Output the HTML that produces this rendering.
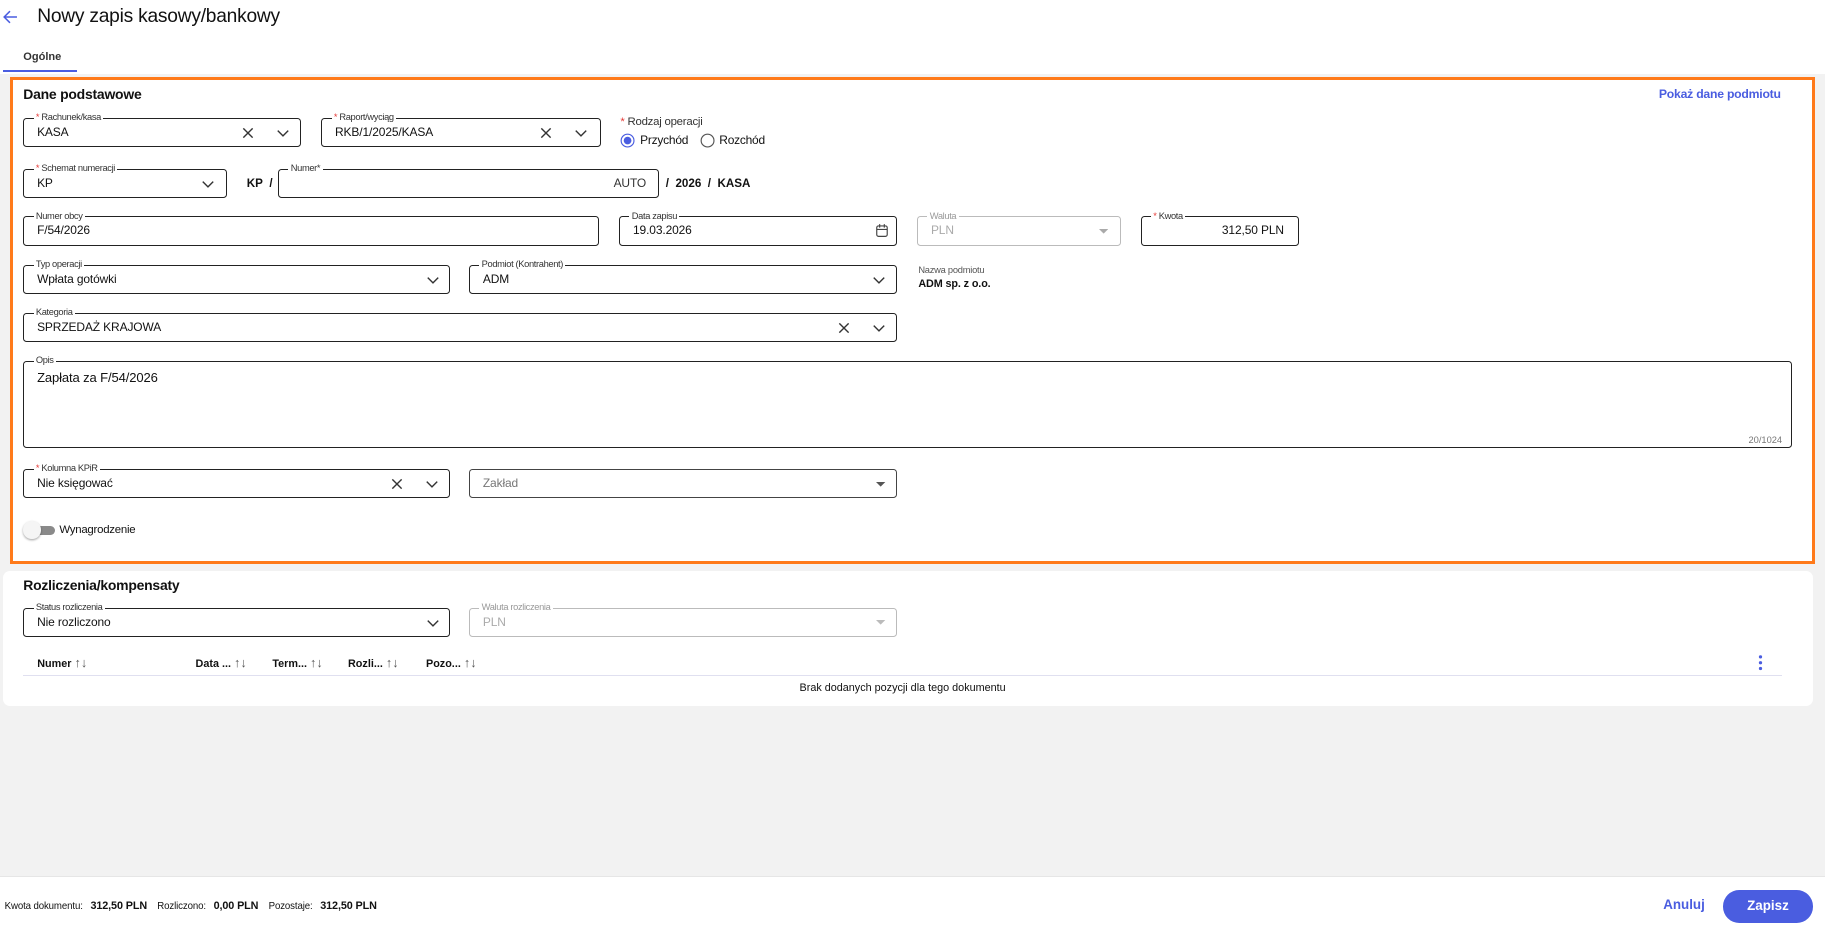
<!DOCTYPE html>
<html><head><meta charset="utf-8"><style>
html,body{margin:0;padding:0}
body{width:1825px;height:929px;overflow:hidden;background:#fff;font-family:"Liberation Sans",sans-serif;color:#111}
#r{zoom:1.16390;width:1568px;height:799px;position:relative;background:#f2f2f2}
.a{position:absolute}
.top{position:absolute;left:0;top:0;width:1568px;height:64px;background:#fff}
.f{position:absolute;border:1px solid #222;border-radius:3px;height:25px;box-sizing:border-box;background:#fff}
.f.d{border-color:#bbb}
.f .l{position:absolute;top:-6px;left:8px;font-size:8px;background:#fff;padding:0 2px;color:#333;line-height:10px;letter-spacing:-.3px}
.f.d .l{color:#999}
.f .v{position:absolute;left:11px;top:6px;font-size:10.3px;line-height:12px;letter-spacing:-.1px}
.f.d .v{color:#aaa}
.s{color:#e53935}
.ic{position:absolute;top:6px}
.b{font-weight:bold}
</style></head><body><div id="r">
<div class="top"></div>
<svg class="a" style="left:3px;top:9px" width="13" height="12" viewBox="0 0 13 12"><path d="M12 6H1.5M6 1L1 6l5 5" stroke="#4a5de0" stroke-width="1.3" fill="none"/></svg>
<div class="a" style="left:32px;top:5px;font-size:16.5px;letter-spacing:-.2px">Nowy zapis kasowy/bankowy</div>
<div class="a" style="left:20px;top:44px;font-size:9.5px;font-weight:bold;color:#333">Ogólne</div>
<div class="a" style="left:3px;top:60px;width:63px;height:2px;background:#4a5de0"></div>

<div class="a" style="left:9px;top:66px;width:1550px;height:419px;box-sizing:border-box;border:3px solid #ff7a1a;background:#fff"></div>
<div class="a b" style="left:20px;top:74px;font-size:12px;letter-spacing:-.2px">Dane podstawowe</div>
<div class="a b" style="left:1424px;top:75px;width:106px;text-align:right;font-size:10.5px;letter-spacing:-.2px;color:#4a5de0">Pokaż dane podmiotu</div>

<div class="f" style="left:20px;top:101px;width:239px"><span class="l"><span class="s">*</span> Rachunek/kasa</span><span class="v">KASA</span>
<svg class="ic" style="left:186px" width="12" height="12"><path d="M2 2l8 8M10 2l-8 8" stroke="#333" stroke-width="1.2"/></svg>
<svg class="ic" style="left:216px" width="12" height="12"><path d="M1.5 4l4.5 4.5 4.5-4.5" stroke="#333" stroke-width="1.2" fill="none"/></svg></div>
<div class="f" style="left:276px;top:101px;width:240px"><span class="l"><span class="s">*</span> Raport/wyciąg</span><span class="v">RKB/1/2025/KASA</span>
<svg class="ic" style="left:186px" width="12" height="12"><path d="M2 2l8 8M10 2l-8 8" stroke="#333" stroke-width="1.2"/></svg>
<svg class="ic" style="left:216px" width="12" height="12"><path d="M1.5 4l4.5 4.5 4.5-4.5" stroke="#333" stroke-width="1.2" fill="none"/></svg></div>
<div class="a" style="left:533px;top:100px;font-size:9.8px;color:#333;letter-spacing:-.2px"><span class="s">*</span> Rodzaj operacji</div>
<svg class="a" style="left:533px;top:114px" width="13" height="13"><circle cx="6.5" cy="6.5" r="5.5" stroke="#4a5de0" fill="#fff"/><circle cx="6.5" cy="6.5" r="3.3" fill="#4a5de0"/></svg>
<div class="a" style="left:550px;top:114px;font-size:10.3px;letter-spacing:-.2px">Przychód</div>
<svg class="a" style="left:601px;top:114px" width="13" height="13"><circle cx="6.5" cy="6.5" r="5.5" stroke="#555" fill="#fff"/></svg>
<div class="a" style="left:618px;top:114px;font-size:10.3px;letter-spacing:-.2px">Rozchód</div>

<div class="f" style="left:20px;top:145px;width:175px"><span class="l"><span class="s">*</span> Schemat numeracji</span><span class="v">KP</span>
<svg class="ic" style="left:152px" width="12" height="12"><path d="M1.5 4l4.5 4.5 4.5-4.5" stroke="#333" stroke-width="1.2" fill="none"/></svg></div>
<div class="a b" style="left:212px;top:152px;font-size:10px">KP&nbsp; /</div>
<div class="f" style="left:239px;top:145px;width:327px"><span class="l">Numer*</span><span class="v" style="left:auto;right:10px;color:#333">AUTO</span></div>
<div class="a b" style="left:572px;top:152px;font-size:10px">/&nbsp; 2026&nbsp; /&nbsp; KASA</div>

<div class="f" style="left:20px;top:186px;width:495px"><span class="l">Numer obcy</span><span class="v">F/54/2026</span></div>
<div class="f" style="left:532px;top:186px;width:239px"><span class="l">Data zapisu</span><span class="v">19.03.2026</span>
<svg class="ic" style="left:219px;top:5px" width="12" height="13"><rect x="1.5" y="2.5" width="9" height="9" rx="1.5" stroke="#444" fill="none"/><path d="M1.5 5.5h9M4 1v3M8 1v3" stroke="#444"/></svg></div>
<div class="f d" style="left:788px;top:186px;width:175px"><span class="l">Waluta</span><span class="v">PLN</span>
<svg class="ic" style="left:155px;top:10px" width="8" height="5"><path d="M0 0h8L4 4z" fill="#aaa"/></svg></div>
<div class="f" style="left:980px;top:186px;width:136px"><span class="l"><span class="s">*</span> Kwota</span><span class="v" style="left:auto;right:12px">312,50 PLN</span></div>

<div class="f" style="left:20px;top:228px;width:367px"><span class="l">Typ operacji</span><span class="v">Wpłata gotówki</span>
<svg class="ic" style="left:345px" width="12" height="12"><path d="M1.5 4l4.5 4.5 4.5-4.5" stroke="#333" stroke-width="1.2" fill="none"/></svg></div>
<div class="f" style="left:403px;top:228px;width:368px"><span class="l">Podmiot (Kontrahent)</span><span class="v">ADM</span>
<svg class="ic" style="left:345px" width="12" height="12"><path d="M1.5 4l4.5 4.5 4.5-4.5" stroke="#333" stroke-width="1.2" fill="none"/></svg></div>
<div class="a" style="left:789px;top:228px;font-size:8px;color:#555;letter-spacing:-.2px">Nazwa podmiotu</div>
<div class="a b" style="left:789px;top:239px;font-size:9.3px;letter-spacing:-.1px">ADM sp. z o.o.</div>

<div class="f" style="left:20px;top:269px;width:751px"><span class="l">Kategoria</span><span class="v">SPRZEDAŻ KRAJOWA</span>
<svg class="ic" style="left:698px" width="12" height="12"><path d="M2 2l8 8M10 2l-8 8" stroke="#333" stroke-width="1.2"/></svg>
<svg class="ic" style="left:728px" width="12" height="12"><path d="M1.5 4l4.5 4.5 4.5-4.5" stroke="#333" stroke-width="1.2" fill="none"/></svg></div>

<div class="f" style="left:20px;top:310px;width:1520px;height:75px"><span class="l">Opis</span><span class="v" style="top:8px;font-size:11.2px">Zapłata za F/54/2026</span>
<span class="a" style="right:8px;bottom:2px;font-size:8px;color:#777">20/1024</span></div>

<div class="f" style="left:20px;top:403px;width:367px"><span class="l"><span class="s">*</span> Kolumna KPiR</span><span class="v">Nie księgować</span>
<svg class="ic" style="left:314px" width="12" height="12"><path d="M2 2l8 8M10 2l-8 8" stroke="#333" stroke-width="1.2"/></svg>
<svg class="ic" style="left:344px" width="12" height="12"><path d="M1.5 4l4.5 4.5 4.5-4.5" stroke="#333" stroke-width="1.2" fill="none"/></svg></div>
<div class="f" style="left:403px;top:403px;width:368px;border-color:#444"><span class="v" style="color:#777">Zakład</span>
<svg class="ic" style="left:349px;top:10px" width="8" height="5"><path d="M0 0h8L4 4z" fill="#555"/></svg></div>

<div class="a" style="left:25px;top:452px;width:22px;height:8px;border-radius:4px;background:#8a8a8a"></div>
<div class="a" style="left:20px;top:448px;width:15px;height:15px;border-radius:50%;background:#f5f5f5;box-shadow:0 1px 2px rgba(0,0,0,.35)"></div>
<div class="a" style="left:51px;top:450px;font-size:9.8px;letter-spacing:-.2px">Wynagrodzenie</div>

<div class="a" style="left:3px;top:491px;width:1555px;height:116px;background:#fff;border-radius:6px"></div>
<div class="a b" style="left:20px;top:496px;font-size:12px;letter-spacing:-.2px">Rozliczenia/kompensaty</div>
<div class="f" style="left:20px;top:522px;width:367px"><span class="l">Status rozliczenia</span><span class="v">Nie rozliczono</span>
<svg class="ic" style="left:345px" width="12" height="12"><path d="M1.5 4l4.5 4.5 4.5-4.5" stroke="#333" stroke-width="1.2" fill="none"/></svg></div>
<div class="f d" style="left:403px;top:522px;width:368px"><span class="l">Waluta rozliczenia</span><span class="v">PLN</span>
<svg class="ic" style="left:349px;top:10px" width="8" height="5"><path d="M0 0h8L4 4z" fill="#bbb"/></svg></div>
<div class="a b" style="left:32px;top:563px;font-size:9.3px">Numer <span style="font-weight:normal;color:#555;font-size:11px">↑↓</span></div>
<div class="a b" style="left:168px;top:563px;font-size:9.3px">Data ... <span style="font-weight:normal;color:#555;font-size:11px">↑↓</span></div>
<div class="a b" style="left:234px;top:563px;font-size:9.3px">Term... <span style="font-weight:normal;color:#555;font-size:11px">↑↓</span></div>
<div class="a b" style="left:299px;top:563px;font-size:9.3px">Rozli... <span style="font-weight:normal;color:#555;font-size:11px">↑↓</span></div>
<div class="a b" style="left:366px;top:563px;font-size:9.3px">Pozo... <span style="font-weight:normal;color:#555;font-size:11px">↑↓</span></div>
<svg class="a" style="left:1510px;top:562px" width="6" height="16"><circle cx="3" cy="2.5" r="1.4" fill="#4a5de0"/><circle cx="3" cy="7.5" r="1.4" fill="#4a5de0"/><circle cx="3" cy="12.5" r="1.4" fill="#4a5de0"/></svg>
<div class="a" style="left:20px;top:580px;width:1511px;height:1px;background:#e0e0f0"></div>
<div class="a" style="left:20px;top:586px;width:1511px;text-align:center;font-size:9.3px">Brak dodanych pozycji dla tego dokumentu</div>

<div class="a" style="left:0;top:753px;width:1568px;height:46px;background:#fff;border-top:1px solid #e6e6e6"></div>
<div class="a" style="left:4px;top:773px;font-size:8.3px;letter-spacing:-.1px">Kwota dokumentu: &nbsp; <b style="font-size:9.3px">312,50 PLN</b> &nbsp; &nbsp;Rozliczono: &nbsp; <b style="font-size:9.3px">0,00 PLN</b> &nbsp; &nbsp;Pozostaje: &nbsp; <b style="font-size:9.3px">312,50 PLN</b></div>
<div class="a b" style="left:1429px;top:771px;font-size:11.5px;color:#4a5de0">Anuluj</div>
<div class="a b" style="left:1480px;top:765px;width:78px;height:28px;border-radius:14px;background:#4a5de0;color:#fff;font-size:11.5px;text-align:center;line-height:28px">Zapisz</div>
</div></body></html>
